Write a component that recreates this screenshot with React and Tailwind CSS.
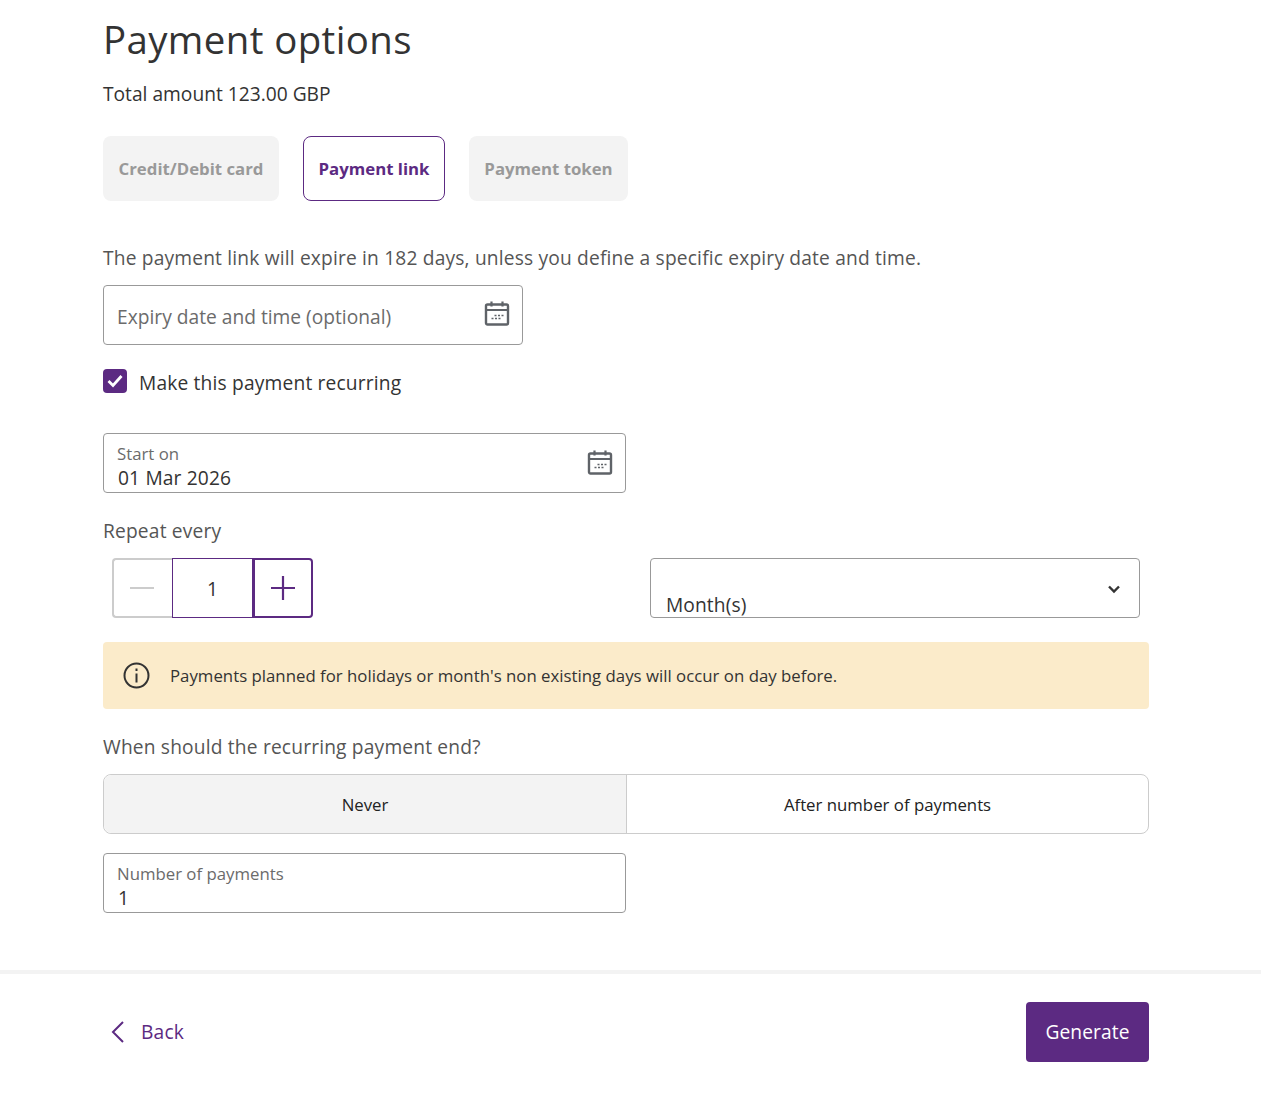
const Cal = ({ className }) => (
  <svg className={className} width="26" height="26" viewBox="0 0 26 26" fill="none" stroke="#5f6368">
    <rect x="2" y="4.5" width="22" height="20" rx="1.5" strokeWidth="2.4" />
    <path d="M2 10h22" strokeWidth="2" />
    <path d="M7.5 1.5v5M18.5 1.5v5" strokeWidth="2.2" />
    <path d="M10.5 15.5h2M14 15.5h2M17.5 15.5h2M7.5 18.5h2M11 18.5h2M14.5 18.5h2" strokeWidth="1.6" />
  </svg>
);

export default function App() {
  return (
    <div className="w-[1261px] h-[1095px] bg-white overflow-hidden font-['Open_Sans',sans-serif] text-[#333333]">
      <div className="pl-[103px] pr-[112px]">
        <h1 className="h-[80px] pt-[13px] text-[38.4px] leading-[52px] tracking-[0.4px] text-[#333333]">Payment options</h1>
        <p className="h-[56px] text-[19.2px] leading-[28px]">Total amount 123.00 GBP</p>
        <div className="flex gap-6">
          <button className="h-[65px] w-[176px] rounded-lg bg-[#f3f3f3] text-[16.8px] font-bold text-[#999999]">Credit/Debit card</button>
          <button className="h-[65px] w-[142px] rounded-lg border border-[#5c2a82] bg-white text-[16.8px] font-bold text-[#5c2a82]">Payment link</button>
          <button className="h-[65px] w-[159px] rounded-lg bg-[#f3f3f3] text-[16.8px] font-bold text-[#999999]">Payment token</button>
        </div>
        <p className="mt-[43px] text-[19.2px] leading-[28px] tracking-[0.17px] text-[#555555]">The payment link will expire in 182 days, unless you define a specific expiry date and time.</p>
        <div className="mt-[13px] flex h-[60px] w-[420px] items-center justify-between rounded border border-[#999999] pl-[13px] pr-[12px]">
          <span className="mt-[4px] text-[19.2px] text-[#6b6b6b]">Expiry date and time (optional)</span>
          <Cal className="mb-[4px]" />
        </div>
        <div className="mt-[24px] flex h-[24px] items-center gap-3">
          <span className="flex h-[24px] w-[24px] items-center justify-center rounded bg-[#5c2a82]">
            <svg width="16" height="14" viewBox="0 0 16 14" fill="none" stroke="white" strokeWidth="2.8"><path d="M1.5 7l4.5 4.5 8.5-9.5" /></svg>
          </span>
          <span className="mt-[4px] text-[19.2px] tracking-[0.17px] text-[#333333]">Make this payment recurring</span>
        </div>
        <div className="mt-[40px] flex h-[60px] w-[523px] items-start justify-between rounded border border-[#999999] pl-[13px] pr-[12px]">
          <div>
            <div className="mt-[9px] text-[16.8px] leading-[22px] text-[#6b6b6b]">Start on</div>
            <div className="pl-[1px] text-[19.2px] leading-[26px] tracking-[0.15px] text-[#333333]">01 Mar 2026</div>
          </div>
          <Cal className="mt-[15px]" />
        </div>
        <p className="mt-[24px] text-[19.2px] leading-[28px] tracking-[0.17px] text-[#555555]">Repeat every</p>
        <div className="mt-[13px] flex h-[60px] gap-[24px]">
          <div className="flex w-[523px] pl-[9px]">
            <div className="flex h-[60px] w-[60px] items-center justify-center rounded-l border-2 border-r-0 border-[#cccccc] pr-[2px]">
              <span className="block h-[2px] w-[24px] bg-[#cccccc]" />
            </div>
            <div className="flex h-[60px] w-[81px] items-center justify-center border border-[#5c2a82] pt-[2px] text-[19.2px]">1</div>
            <div className="flex h-[60px] w-[60px] items-center justify-center rounded-r border-2 border-[#5c2a82]">
              <svg width="26" height="26" viewBox="0 0 26 26" stroke="#5c2a82" strokeWidth="2.2"><path d="M1 13h24M13 1v24" /></svg>
            </div>
          </div>
          <div className="relative h-[60px] w-[490px] rounded border border-[#999999] pl-[15px]">
            <span className="absolute bottom-[-1px] left-[15px] text-[19.2px] leading-[26px] tracking-[0.1px] text-[#333333]">Month(s)</span>
            <svg className="absolute right-[19px] top-[26px]" width="12" height="9" viewBox="0 0 12 9" fill="none" stroke="#333333" strokeWidth="2.4"><path d="M1 1.5l5 5 5-5" /></svg>
          </div>
        </div>
        <div className="mt-[24px] flex h-[67px] items-center gap-[20px] rounded bg-[#fbebca] pl-[20px]">
          <svg width="27" height="27" viewBox="0 0 27 27" fill="none" stroke="#333333" strokeWidth="2">
            <circle cx="13.5" cy="13.5" r="12" />
            <path d="M13.5 11.5v9M13.5 6.5v2.5" />
          </svg>
          <span className="text-[16.8px] tracking-[0.01px] text-[#333333]">Payments planned for holidays or month's non existing days will occur on day before.</span>
        </div>
        <p className="mt-[24px] text-[19.2px] leading-[28px] tracking-[0.17px] text-[#555555]">When should the recurring payment end?</p>
        <div className="mt-[13px] flex h-[60px] rounded-lg border border-[#cccccc] text-[16.8px] text-[#222222]">
          <div className="flex w-[523px] items-center justify-center rounded-l-lg border-r border-[#cccccc] bg-[#f3f3f3] pt-[1px]">Never</div>
          <div className="flex flex-1 items-center justify-center pt-[1px]">After number of payments</div>
        </div>
        <div className="mt-[19px] h-[60px] w-[523px] rounded border border-[#999999] pl-[13px]">
          <div className="mt-[9px] text-[16.8px] leading-[22px] text-[#6b6b6b]">Number of payments</div>
          <div className="pl-[1px] text-[19.2px] leading-[26px] text-[#333333]">1</div>
        </div>
      </div>
      <div className="mt-[57px] flex h-[125px] items-start justify-between border-t-4 border-[#f3f3f3] pl-[103px] pr-[112px] pt-[28px]">
        <div className="flex h-[60px] items-center gap-[16px] pl-[7px] text-[#5c2a82]">
          <svg width="15" height="24" viewBox="0 0 15 24" fill="none" stroke="#5c2a82" strokeWidth="2"><path d="M13 2L3 12l10 10" /></svg>
          <span className="text-[19.2px] tracking-[0.2px]">Back</span>
        </div>
        <button className="h-[60px] w-[123px] rounded bg-[#5c2a82] text-[19.2px] font-medium tracking-[0.1px] text-white">Generate</button>
      </div>
    </div>
  );
}
